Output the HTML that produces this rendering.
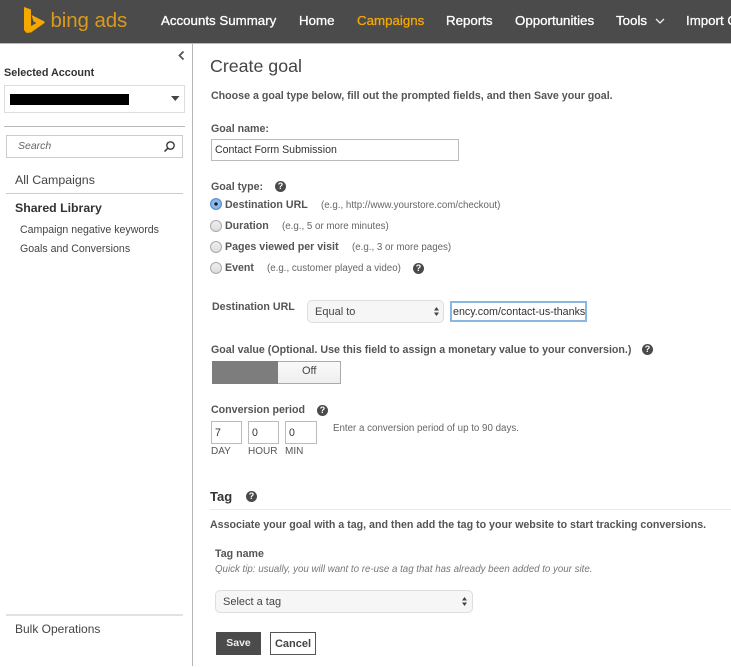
<!DOCTYPE html>
<html><head><meta charset="utf-8"><style>
html,body{margin:0;padding:0;width:731px;height:667px;overflow:hidden;background:#fff}
body{position:relative;font-family:"Liberation Sans",Arial,sans-serif;color:#444}
#w{position:absolute;left:0;top:0;width:731px;height:667px;overflow:hidden;filter:blur(.35px)}
.t,.b{position:absolute;white-space:nowrap}
.a{position:absolute}
.n{color:#fff;font-size:13.3px;font-weight:normal;top:12px;line-height:17px;-webkit-text-stroke:.3px #fff}
.l{font-size:10.65px;font-weight:bold;color:#555;line-height:13px}
.g{font-size:9.75px;color:#666;line-height:12px}
.r{position:absolute;width:10px;height:10px;border-radius:50%;border:1px solid #aaa;background:linear-gradient(#eee,#ddd)}
.q{position:absolute;width:11px;height:11px;border-radius:50%;background:#4a4a4a;color:#fff;font-size:9px;font-weight:bold;line-height:11px;text-align:center}
.i{position:absolute;border:1px solid #bbb;background:#fff;box-sizing:border-box;font-size:10.6px;color:#333;line-height:20px;padding-left:3px}
.s{position:absolute;border:1px solid #ddd;border-radius:5px;background:#f6f6f6;box-sizing:border-box;font-size:11px;color:#444}
</style></head><body><div id="w">
<div class="a" style="left:0;top:0;width:731px;height:44px;background:#4b4b4b;border-bottom:1px solid #bbb;box-sizing:border-box"></div>
<svg class="a" style="left:0;top:0" width="50" height="40" viewBox="0 0 50 40"><path d="M24 7L31 9.500V26L36.500 23L33.500 21.500L31.500 15L44.500 21.500V23L31 32.500L26.500 33L24 30Z" fill="#f5a800"/></svg>
<div class="t" style="left:50.500px;top:6px;font-size:20.500px;line-height:30px;color:#d99a1c;letter-spacing:-.1px">bing ads</div>
<div class="t n" style="left:161px">Accounts Summary</div>
<div class="t n" style="left:299px">Home</div>
<div class="t n" style="left:357px;color:#f5a800;-webkit-text-stroke:.3px #f5a800">Campaigns</div>
<div class="t n" style="left:446px">Reports</div>
<div class="t n" style="left:515px">Opportunities</div>
<div class="t n" style="left:616px">Tools</div>
<svg class="a" style="left:655px;top:18px" width="10" height="6"><path d="M1 1L5 5L9 1" fill="none" stroke="#eee" stroke-width="1.300"/></svg>
<div class="t n" style="left:686px">Import Campaigns</div>

<div class="a" style="left:192px;top:44px;width:1px;height:622px;background:#b5b5b5"></div>
<svg class="a" style="left:177px;top:50px" width="9" height="11"><path d="M6.500 1.500L2.500 5.500L6.500 9.500" fill="none" stroke="#555" stroke-width="1.800"/></svg>
<div class="t" style="left:4px;top:66.500px;font-size:10.800px;font-weight:bold;color:#333;line-height:13px">Selected Account</div>
<div class="a" style="left:4px;top:85px;width:181px;height:28px;border:1px solid #ddd;box-sizing:border-box"></div>
<div class="a" style="left:10px;top:94px;width:119px;height:11px;background:#000"></div>
<svg class="a" style="left:171px;top:96px" width="9" height="6"><path d="M0 0H8.500L4.250 5Z" fill="#444"/></svg>
<div class="a" style="left:4px;top:126px;width:181px;height:1px;background:#b8b8b8"></div>
<div class="a" style="left:6px;top:135px;width:177px;height:23px;border:1px solid #ccc;box-sizing:border-box"></div>
<div class="t" style="left:18px;top:140px;font-size:10.500px;font-style:italic;color:#666;line-height:13px">Search</div>
<svg class="a" style="left:163px;top:140px" width="13" height="13"><circle cx="7.500" cy="5.500" r="3.700" fill="none" stroke="#333" stroke-width="1.300"/><path d="M4.800 8.300L1.500 11.500" stroke="#333" stroke-width="1.500"/></svg>
<div class="t" style="left:15px;top:172px;font-size:12.400px;color:#444;line-height:16px">All Campaigns</div>
<div class="a" style="left:6px;top:193px;width:177px;height:1px;background:#ccc"></div>
<div class="t" style="left:15px;top:200px;font-size:12.300px;font-weight:bold;color:#333;line-height:16px">Shared Library</div>
<div class="t" style="left:20px;top:224px;font-size:10.600px;color:#444;line-height:13px">Campaign negative keywords</div>
<div class="t" style="left:20px;top:243px;font-size:10.600px;color:#444;line-height:13px">Goals and Conversions</div>
<div class="a" style="left:6px;top:614px;width:177px;height:2px;background:#e2e2e2"></div>
<div class="t" style="left:15px;top:621px;font-size:12px;color:#444;line-height:16px">Bulk Operations</div>

<div class="t" style="left:210px;top:55.500px;font-size:17.800px;color:#444;line-height:21px">Create goal</div>
<div class="t l" style="left:211px;top:90px">Choose a goal type below, fill out the prompted fields, and then Save your goal.</div>
<div class="t l" style="left:211px;top:123px">Goal name:</div>
<div class="i" style="left:211px;top:139px;width:248px;height:22px">Contact Form Submission</div>
<div class="t l" style="left:211px;top:181px">Goal type:</div>
<div class="q" style="left:275px;top:181px">?</div>
<div class="r" style="left:210px;top:198px;background:radial-gradient(circle,#123 0,#123 1.500px,#9cc3ee 2px,#6fa5e0 6px);border-color:#5a8fd0"></div>
<div class="t l" style="left:225px;top:198.500px">Destination URL</div><div class="t g" style="left:321px;top:199.500px">(e.g., http://www.yourstore.com/checkout)</div>
<div class="r" style="left:210px;top:220px"></div>
<div class="t l" style="left:225px;top:220px">Duration</div><div class="t g" style="left:282px;top:221px">(e.g., 5 or more minutes)</div>
<div class="r" style="left:210px;top:241px"></div>
<div class="t l" style="left:225px;top:241px">Pages viewed per visit</div><div class="t g" style="left:352px;top:242px">(e.g., 3 or more pages)</div>
<div class="r" style="left:210px;top:262px"></div>
<div class="t l" style="left:225px;top:262px">Event</div><div class="t g" style="left:267px;top:263px">(e.g., customer played a video)</div>
<div class="q" style="left:413px;top:263px">?</div>
<div class="t l" style="left:212px;top:301px">Destination URL</div>
<div class="s" style="left:307px;top:300px;width:137px;height:23px;line-height:22px;padding-left:7px">Equal to</div>
<svg class="a" style="left:433px;top:306px" width="7" height="11"><path d="M3.500 1L6 4.500H1ZM3.500 10L1 6.500H6Z" fill="#444"/></svg>
<div class="a" style="left:450px;top:301px;width:137px;height:21px;border:2px solid #8ab6e2;box-sizing:border-box;font-size:10.700px;color:#333;line-height:18px;padding-left:1px;white-space:nowrap;overflow:hidden">ency.com/contact-us-thanks</div>
<div class="t l" style="left:211px;top:343.500px">Goal value (Optional. Use this field to assign a monetary value to your conversion.)</div>
<div class="q" style="left:642px;top:344px">?</div>
<div class="a" style="left:212px;top:361px;width:129px;height:23px;border:1px solid #aaa;box-sizing:border-box;background:linear-gradient(#fafafa,#eee)"></div>
<div class="a" style="left:212px;top:361px;width:66px;height:23px;background:#7d7d7d"></div>
<div class="t" style="left:302px;top:364px;font-size:11px;color:#444;line-height:14px">Off</div>
<div class="t l" style="left:211px;top:404px">Conversion period</div>
<div class="q" style="left:317px;top:405px">?</div>
<div class="i" style="left:211px;top:421px;width:31px;height:23px;line-height:22px">7</div>
<div class="i" style="left:248px;top:421px;width:31px;height:23px;line-height:22px">0</div>
<div class="i" style="left:285px;top:421px;width:32px;height:23px;line-height:22px">0</div>
<div class="t g" style="left:333px;top:423px">Enter a conversion period of up to 90 days.</div>
<div class="t" style="left:211px;top:446px;font-size:10px;color:#555;line-height:12px">DAY</div>
<div class="t" style="left:248px;top:446px;font-size:10px;color:#555;line-height:12px">HOUR</div>
<div class="t" style="left:285px;top:446px;font-size:10px;color:#555;line-height:12px">MIN</div>
<div class="t" style="left:210px;top:489px;font-size:13px;font-weight:bold;color:#333;line-height:16px">Tag</div>
<div class="q" style="left:246px;top:491px">?</div>
<div class="a" style="left:210px;top:509px;width:521px;height:1px;background:#e8e8e8"></div>
<div class="t l" style="left:210px;top:519px">Associate your goal with a tag, and then add the tag to your website to start tracking conversions.</div>
<div class="t l" style="left:215px;top:548px">Tag name</div>
<div class="t" style="left:215px;top:564px;font-size:9.730px;font-style:italic;color:#777;line-height:12px">Quick tip: usually, you will want to re-use a tag that has already been added to your site.</div>
<div class="s" style="left:215px;top:590px;width:258px;height:23px;line-height:22px;padding-left:7px">Select a tag</div>
<svg class="a" style="left:461px;top:596px" width="7" height="11"><path d="M3.500 1L6 4.500H1ZM3.500 10L1 6.500H6Z" fill="#444"/></svg>
<div class="a" style="left:216px;top:632px;width:45px;height:23px;background:#4b4b4b;color:#eee;font-size:10.500px;font-weight:bold;text-align:center;line-height:23px">Save</div>
<div class="a" style="left:270px;top:632px;width:46px;height:23px;border:1px solid #555;box-sizing:border-box;color:#444;font-size:11px;font-weight:bold;text-align:center;line-height:22px">Cancel</div>
</div></body></html>
